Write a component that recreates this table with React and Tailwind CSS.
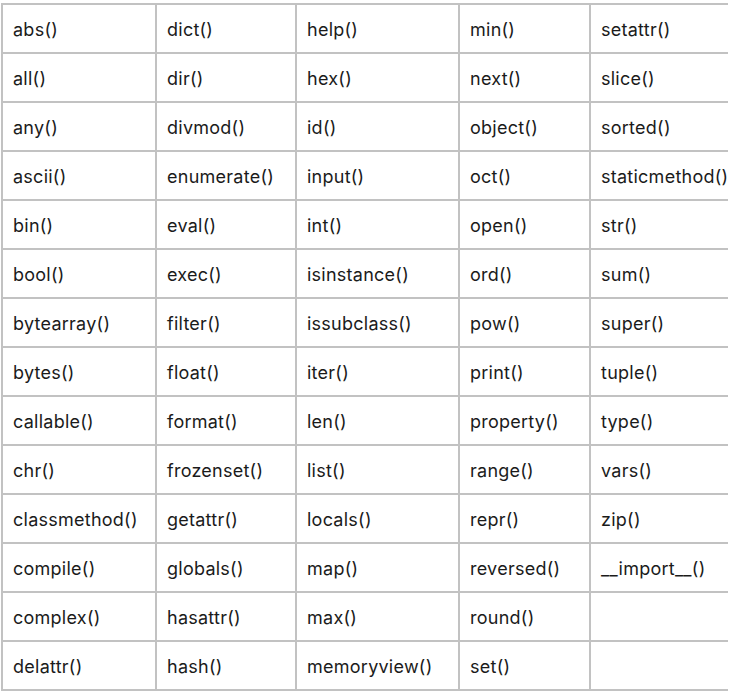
import React from "react";

const rows = [
  ["abs()", "dict()", "help()", "min()", "setattr()"],
  ["all()", "dir()", "hex()", "next()", "slice()"],
  ["any()", "divmod()", "id()", "object()", "sorted()"],
  ["ascii()", "enumerate()", "input()", "oct()", "staticmethod()"],
  ["bin()", "eval()", "int()", "open()", "str()"],
  ["bool()", "exec()", "isinstance()", "ord()", "sum()"],
  ["bytearray()", "filter()", "issubclass()", "pow()", "super()"],
  ["bytes()", "float()", "iter()", "print()", "tuple()"],
  ["callable()", "format()", "len()", "property()", "type()"],
  ["chr()", "frozenset()", "list()", "range()", "vars()"],
  ["classmethod()", "getattr()", "locals()", "repr()", "zip()"],
  ["compile()", "globals()", "map()", "reversed()", "__import__()"],
  ["complex()", "hasattr()", "max()", "round()", ""],
  ["delattr()", "hash()", "memoryview()", "set()", ""],
];

export default function App() {
  return (
    <div className="bg-white w-[733px] h-[691px] overflow-hidden pt-[3px] pl-[1px]">
      <div className="w-[727px] overflow-hidden">
        <div
          className="grid w-[740px] border-l-2 border-t-2 border-[#c2c2c2] grid-cols-[154px_140px_163px_131px_150px] text-[18px] tracking-[0.25px] text-[#1b1b1b]"
          style={{ fontFamily: "Inter, 'Noto Sans', sans-serif" }}
        >
          {rows.flat().map((t, i) => (
            <div
              key={i}
              className="h-[49px] border-r-2 border-b-2 border-[#c2c2c2] pl-[10px] pt-[2px] flex items-center whitespace-nowrap overflow-hidden"
            >
              {t}
            </div>
          ))}
        </div>
      </div>
    </div>
  );
}
